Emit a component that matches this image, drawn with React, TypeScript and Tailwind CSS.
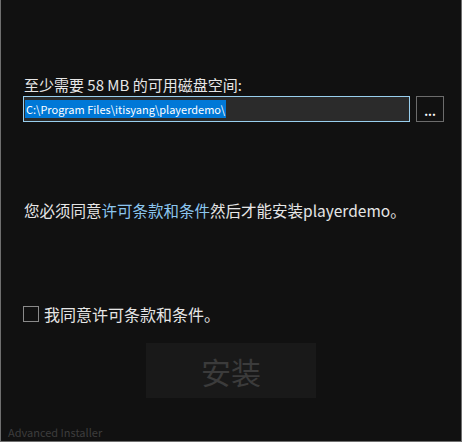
import React from 'react';

const font = { fontFamily: '"Noto Sans CJK SC", "Noto Sans", sans-serif' };

const App: React.FC = () => {
  return (
    <div
      className="w-[462px] h-[442px] bg-[#111111] border-x border-b border-[#6f6f6f] flex flex-col text-[#e6e6e6] overflow-hidden"
      style={font}
    >
      {/* disk space */}
      <div className="mt-[75px] ml-[23px] text-[15px] leading-[20px]">至少需要 58 MB 的可用磁盘空间:</div>
      <div className="mt-[1px] ml-[22px] flex items-center gap-[6px]">
        <div className="w-[387px] h-[26px] bg-[#2b2b2b] border border-[#99cfee] flex items-center px-[1px]">
          <span className="bg-[#0078d7] text-white text-[11px] leading-[18px] px-[1px]">
            C:\Program Files\itisyang\playerdemo\
          </span>
        </div>
        <button className="w-[28px] h-[26px] border border-[#6c6c6c] bg-[#111111] text-white text-[12px] font-bold leading-none pt-[4px]">
          ...
        </button>
      </div>

      {/* license */}
      <div className="mt-[78px] ml-[23px] text-[15.5px] leading-[20px]">
        您必须同意<span className="text-[#8cc6ef]">许可条款和条件</span>然后才能安装playerdemo。
      </div>

      <div className="mt-[84px] ml-[22px] flex items-center gap-[5px]">
        <div className="w-[16px] h-[16px] border border-[#8a8a8a]" />
        <span className="text-[16px] leading-[20px]">我同意许可条款和条件。</span>
      </div>

      <div className="mt-[19px] flex justify-center">
        <button className="w-[170px] h-[55px] bg-[#191919] text-[#3b3b3b] text-[30px] leading-none">安装</button>
      </div>

      <div className="mt-auto mb-[1px] ml-[7px] text-[11px] leading-[16px] text-[#3d3d3d]">Advanced Installer</div>
    </div>
  );
};

export default App;
